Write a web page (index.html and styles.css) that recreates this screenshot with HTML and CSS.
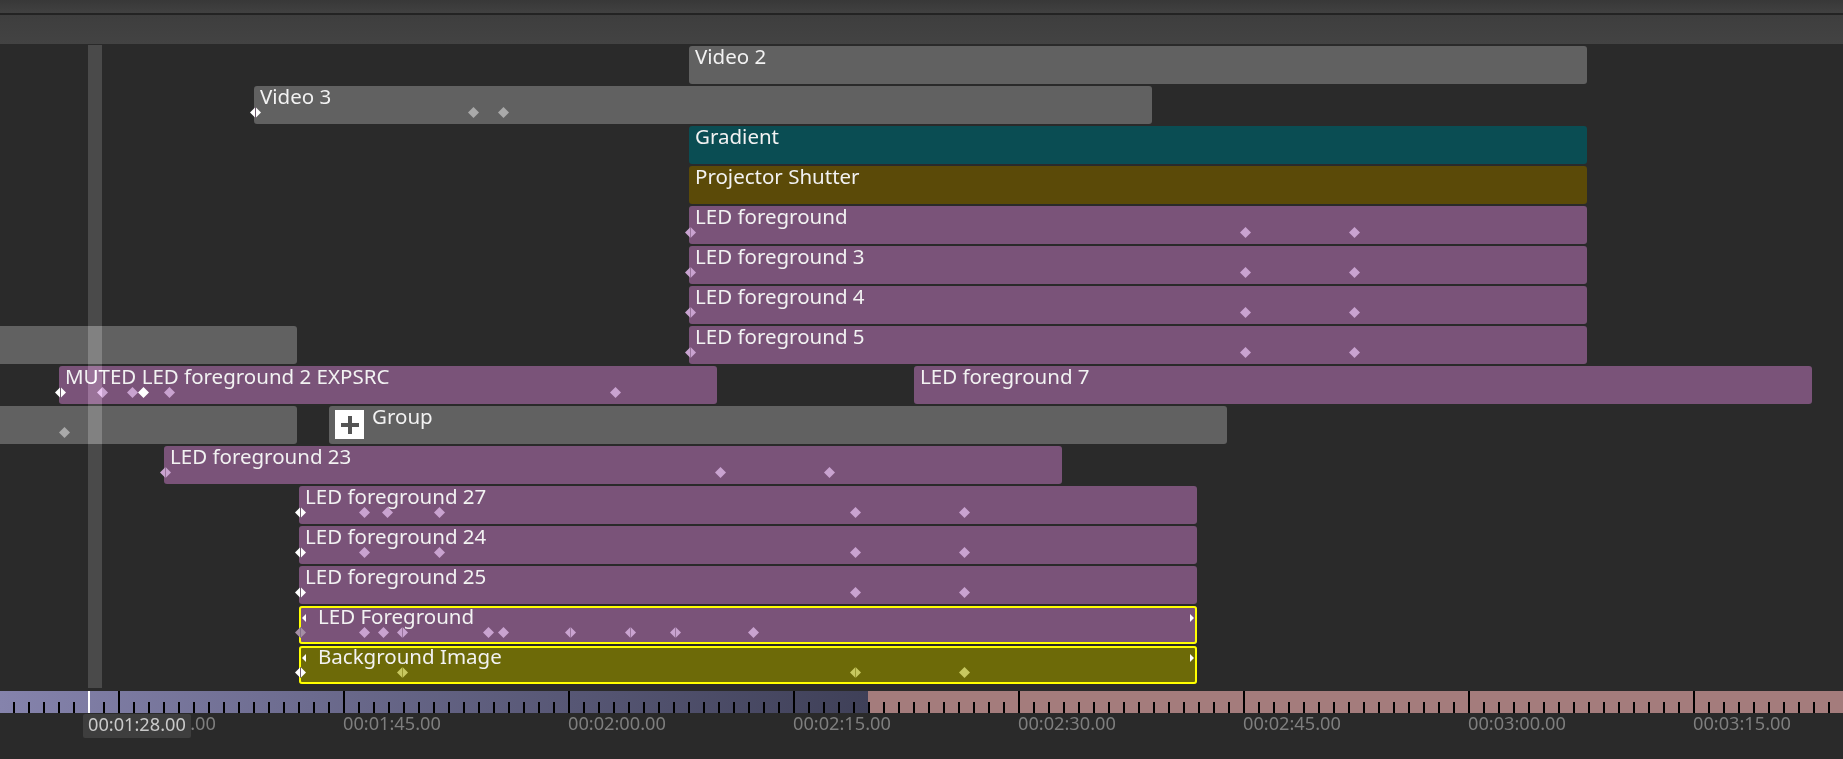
FILE: index.html
```html
<!DOCTYPE html>
<html lang="en">
<head>
    <meta charset="UTF-8">
    <title>Timeline</title>
    <link rel="stylesheet" href="styles.css">
</head>
<body>
    <div class="timeline">
        <div class="topbar"></div>
        <div class="subbar"></div>

        <div class="tracks">
            <div class="track">
                <div class="clip clip-grey" style="left:689px;width:898px"><span class="name">Video 2</span></div>
            </div>
            <div class="track">
                <div class="clip clip-grey" style="left:254px;width:898px">
                    <span class="name">Video 3</span>
                    <i class="kf split kf-white" style="left:-4px"></i>
                    <i class="kf" style="left:214px"></i>
                    <i class="kf" style="left:244px"></i>
                </div>
            </div>
            <div class="track">
                <div class="clip clip-teal" style="left:689px;width:898px"><span class="name">Gradient</span></div>
            </div>
            <div class="track">
                <div class="clip clip-brown" style="left:689px;width:898px"><span class="name">Projector Shutter</span></div>
            </div>
            <div class="track">
                <div class="clip clip-led" style="left:689px;width:898px">
                    <span class="name">LED foreground</span>
                    <i class="kf split" style="left:-4px"></i>
                    <i class="kf" style="left:551px"></i>
                    <i class="kf" style="left:660px"></i>
                </div>
            </div>
            <div class="track">
                <div class="clip clip-led" style="left:689px;width:898px">
                    <span class="name">LED foreground 3</span>
                    <i class="kf split" style="left:-4px"></i>
                    <i class="kf" style="left:551px"></i>
                    <i class="kf" style="left:660px"></i>
                </div>
            </div>
            <div class="track">
                <div class="clip clip-led" style="left:689px;width:898px">
                    <span class="name">LED foreground 4</span>
                    <i class="kf split" style="left:-4px"></i>
                    <i class="kf" style="left:551px"></i>
                    <i class="kf" style="left:660px"></i>
                </div>
            </div>
            <div class="track">
                <div class="clip clip-grey" style="left:-601px;width:898px"></div>
                <div class="clip clip-led" style="left:689px;width:898px">
                    <span class="name">LED foreground 5</span>
                    <i class="kf split" style="left:-4px"></i>
                    <i class="kf" style="left:551px"></i>
                    <i class="kf" style="left:660px"></i>
                </div>
            </div>
            <div class="track">
                <div class="clip clip-led" style="left:59px;width:658px">
                    <span class="name">MUTED LED foreground 2 EXPSRC</span>
                    <i class="kf split kf-white" style="left:-4px"></i>
                    <i class="kf" style="left:38px"></i>
                    <i class="kf" style="left:68px"></i>
                    <i class="kf kf-white" style="left:79px"></i>
                    <i class="kf" style="left:105px"></i>
                    <i class="kf" style="left:551px"></i>
                </div>
                <div class="clip clip-led" style="left:914px;width:898px"><span class="name">LED foreground 7</span></div>
            </div>
            <div class="track">
                <div class="clip clip-grey" style="left:-601px;width:898px">
                    <i class="kf" style="left:660px"></i>
                </div>
                <div class="clip clip-grey clip-group" style="left:329px;width:898px">
                    <span class="expand">
                        <svg width="20" height="20" viewBox="0 0 20 20"><path d="M8 1h4v7h7v4h-7v7H8v-7H1V8h7z" fill="#555"/></svg>
                    </span>
                    <span class="name">Group</span>
                </div>
            </div>
            <div class="track">
                <div class="clip clip-led" style="left:164px;width:898px">
                    <span class="name">LED foreground 23</span>
                    <i class="kf split" style="left:-4px"></i>
                    <i class="kf" style="left:551px"></i>
                    <i class="kf" style="left:660px"></i>
                </div>
            </div>
            <div class="track">
                <div class="clip clip-led" style="left:299px;width:898px">
                    <span class="name">LED foreground 27</span>
                    <i class="kf split kf-white" style="left:-4px"></i>
                    <i class="kf" style="left:60px"></i>
                    <i class="kf" style="left:83px"></i>
                    <i class="kf" style="left:135px"></i>
                    <i class="kf" style="left:551px"></i>
                    <i class="kf" style="left:660px"></i>
                </div>
            </div>
            <div class="track">
                <div class="clip clip-led" style="left:299px;width:898px">
                    <span class="name">LED foreground 24</span>
                    <i class="kf split kf-white" style="left:-4px"></i>
                    <i class="kf" style="left:60px"></i>
                    <i class="kf" style="left:135px"></i>
                    <i class="kf" style="left:551px"></i>
                    <i class="kf" style="left:660px"></i>
                </div>
            </div>
            <div class="track">
                <div class="clip clip-led" style="left:299px;width:898px">
                    <span class="name">LED foreground 25</span>
                    <i class="kf split kf-white" style="left:-4px"></i>
                    <i class="kf" style="left:551px"></i>
                    <i class="kf" style="left:660px"></i>
                </div>
            </div>
            <div class="track">
                <div class="clip clip-led clip-selected" style="left:299px;width:898px">
                    <span class="name">LED Foreground</span>
                    <i class="handle handle-left"></i>
                    <i class="handle handle-right"></i>
                    <i class="kf split kf-dim" style="left:-4px"></i>
                    <i class="kf" style="left:60px"></i>
                    <i class="kf" style="left:79px"></i>
                    <i class="kf split" style="left:98px"></i>
                    <i class="kf" style="left:184px"></i>
                    <i class="kf" style="left:199px"></i>
                    <i class="kf split" style="left:266px"></i>
                    <i class="kf split" style="left:326px"></i>
                    <i class="kf split" style="left:371px"></i>
                    <i class="kf" style="left:449px"></i>
                </div>
            </div>
            <div class="track">
                <div class="clip clip-olive clip-selected" style="left:299px;width:898px">
                    <span class="name">Background Image</span>
                    <i class="handle handle-left"></i>
                    <i class="handle handle-right"></i>
                    <i class="kf split kf-white" style="left:-4px"></i>
                    <i class="kf split" style="left:98px"></i>
                    <i class="kf split" style="left:551px"></i>
                    <i class="kf" style="left:660px"></i>
                </div>
            </div>
            <div class="playhead-band"></div>
        </div>

        <div class="ruler">
            <div class="playhead"></div>
        </div>

        <div class="labels">
            <span class="label">00:01:30.00</span>
            <span class="label">00:01:45.00</span>
            <span class="label">00:02:00.00</span>
            <span class="label">00:02:15.00</span>
            <span class="label">00:02:30.00</span>
            <span class="label">00:02:45.00</span>
            <span class="label">00:03:00.00</span>
            <span class="label">00:03:15.00</span>
            <div class="tooltip">00:01:28.00</div>
        </div>
    </div>
</body>
</html>
```

FILE: styles.css
```css
html, body {
    margin: 0;
    padding: 0;
    height: 100%;
    overflow: hidden;
    background-color: #2a2a2a;
}

body {
    font-family: "Noto Sans", sans-serif;
    font-size: 18.2px;
    line-height: 20px;
    color: #f2f2f2;
}

.timeline {
    display: flex;
    flex-direction: column;
    height: 759px;
}

.topbar {
    height: 13px;
    background: linear-gradient(#383838, #414141);
    border-bottom: 2px solid #232323;
}

.subbar {
    height: 29px;
    background: linear-gradient(#3e3e3e, #434343);
}

/* tracks */
.tracks {
    position: relative;
    display: flex;
    flex-direction: column;
    gap: 2px;
    padding: 2px 0 7px;
    overflow: hidden;
}

.track {
    position: relative;
    height: 38px;
}

.clip {
    position: absolute;
    top: 0;
    height: 38px;
    box-sizing: border-box;
    padding: 1px 0 0 6px;
    border-radius: 3px;
    white-space: nowrap;
    --kf: #c9a3d0;
    --split: #9a759d;
}

.name {
    font-size: 20.5px;
    line-height: 18px;
}

.clip-grey { background-color: #616161; --kf: #a9a9a9; --split: #858585; }
.clip-teal { background-color: #0a4d53; }
.clip-brown { background-color: #5b4a08; }
.clip-led { background-color: #7a5379; }
.clip-olive { background-color: #6d6a08; --kf: #c8c860; --split: #9c9a30; }

.clip-group {
    display: flex;
    gap: 8px;
}

.clip-selected {
    padding-left: 19px;
    box-shadow: inset 0 0 0 2px #ffff00;
}

.expand {
    display: flex;
    align-items: center;
    justify-content: center;
    width: 29px;
    height: 29px;
    margin-top: 3px;
    background-color: #fff;
}

/* keyframes */
.kf {
    position: absolute;
    top: 21px;
    width: 11px;
    height: 11px;
    background: var(--kf);
    clip-path: polygon(50% 0, 100% 50%, 50% 100%, 0 50%);
}

.kf-white { --kf: #fff; --split: #6d5a6d; }
.kf-dim { --kf: #a58fa5; --split: #85708a; }

.kf.split {
    background: linear-gradient(to right, var(--kf) 45%, var(--split) 45% 55%, var(--kf) 55%);
}

.handle {
    position: absolute;
    top: 8px;
    width: 0;
    height: 0;
    border-top: 4px solid transparent;
    border-bottom: 4px solid transparent;
}

.handle-left {
    left: 3px;
    border-right: 4px solid #fff;
}

.handle-right {
    right: 3px;
    border-left: 4px solid #fff;
}

.playhead-band {
    position: absolute;
    left: 88px;
    top: 1px;
    bottom: 3px;
    width: 14px;
    background-color: #202020;
    mix-blend-mode: plus-lighter;
}

/* ruler */
.ruler {
    position: relative;
    height: 22px;
    background-image:
        linear-gradient(to right, transparent 118px, #000 118px, #000 120px, transparent 120px),
        linear-gradient(to right, transparent 13px, #000 13px),
        linear-gradient(to right, #8583ac 0, #3f4058 868px, #a47c7c 868px);
    background-size: 225px 100%, 15px 11px, 100% 100%;
    background-position: 0 0, 0 bottom, 0 0;
    background-repeat: repeat-x, repeat-x, no-repeat;
}

.playhead {
    position: absolute;
    left: 88px;
    top: 0;
    bottom: 0;
    width: 2px;
    background-color: #fff;
}

.labels {
    position: relative;
    display: flex;
    padding-left: 118px;
    color: #7e7e7e;
}

.label {
    flex: 0 0 225px;
}

.tooltip {
    position: absolute;
    left: 83px;
    top: 1px;
    height: 24px;
    padding: 0 5px;
    background-color: #3e3e3e;
    border-radius: 2px;
    color: #c9c9c9;
}
```
